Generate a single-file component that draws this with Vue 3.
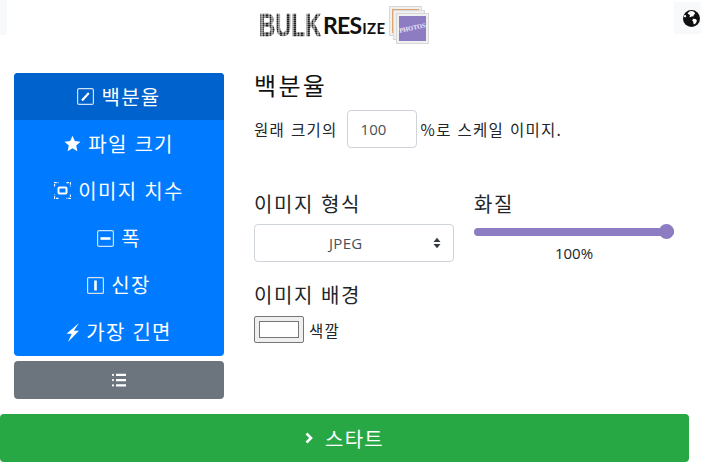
<script setup>
import { ref } from 'vue';

const menu = [
  { label: '백분율', icon: 'edit', active: true },
  { label: '파일 크기', icon: 'star' },
  { label: '이미지 치수', icon: 'dims' },
  { label: '폭', icon: 'minus' },
  { label: '신장', icon: 'bar' },
  { label: '가장 긴면', icon: 'bolt' },
];

const percent = ref('100');
const format = ref('JPEG');
const quality = ref(100);
</script>

<template>
  <div class="page">
    <header class="top">
      <div class="side-stub"></div>
      <div class="logo">
        <span class="bulk">BULK</span>
        <span class="resize">RES<small>IZE</small></span>
        <div class="stack">
          <i class="sheet s1"></i>
          <i class="sheet s2"></i>
          <i class="sheet s3"><span>PHOTOS</span></i>
        </div>
      </div>
      <div class="lang" aria-label="language">
        <svg viewBox="0 0 16 16" width="17" height="17">
          <circle cx="8" cy="8" r="8" fill="#111" />
          <path fill="#fff" d="M6.400 1.100 8.600.9l2 1 .8 1.600-1.300 1.100-.4 1.500-1.400-.2-1 1-1.200-.8.6-1.400-1.500-.6L4.300 3zM9.600 8.200l2.200.2 1.300 1.200-.7 2.300-1.500 1.600-.9-.3-.4-2.200-1-1.300zM1.300 4.600l1.200.2.6 1.200-1.100 1-1.100-.6z" />
        </svg>
      </div>
    </header>

    <div class="body">
      <aside class="side">
        <nav class="menu">
          <a v-for="m in menu" :key="m.label" class="item" :class="{ active: m.active }">
            <svg v-if="m.icon === 'edit'" viewBox="0 0 17 17" width="17" height="17">
              <rect x=".6" y=".6" width="15.800" height="15.800" rx="1.500" fill="none" stroke="#cfe2f7" stroke-width="1.200" />
              <path d="M5 12.500 11.800 5" fill="none" stroke="currentColor" stroke-width="2.200" />
            </svg>
            <svg v-else-if="m.icon === 'star'" viewBox="0 0 16 16" width="17" height="17">
              <path d="M8 .8l2.200 4.900 5.300.6-4 3.600 1.100 5.300L8 12.500l-4.600 2.700 1.100-5.300-4-3.600 5.300-.6z" fill="currentColor" />
            </svg>
            <svg v-else-if="m.icon === 'dims'" viewBox="0 0 17 17" width="17" height="17">
              <path d="M.6 4.500V.6H4.500M12.500.6h3.900V4.500M16.400 12.500v3.900H12.500M4.500 16.400H.6V12.500" fill="none" stroke="currentColor" stroke-width="1.100" stroke-dasharray="2.500 1" />
              <rect x="4.500" y="5.500" width="8" height="6" rx="1" fill="none" stroke="currentColor" stroke-width="2" />
            </svg>
            <svg v-else-if="m.icon === 'minus'" viewBox="0 0 17 17" width="17" height="17">
              <rect x=".6" y=".6" width="15.800" height="15.800" rx="1.500" fill="none" stroke="#cfe2f7" stroke-width="1.200" />
              <rect x="3.500" y="7.200" width="10" height="2.600" fill="currentColor" />
            </svg>
            <svg v-else-if="m.icon === 'bar'" viewBox="0 0 17 17" width="17" height="17">
              <rect x=".6" y=".6" width="15.800" height="15.800" rx="1" fill="none" stroke="#cfe2f7" stroke-width="1.200" />
              <rect x="7.200" y="3.500" width="2.600" height="10" fill="currentColor" />
            </svg>
            <svg v-else viewBox="0 0 13 19" width="13" height="19">
              <path d="M13 0 .5 10.800h5.200L2 19 13 7.800H7.800z" fill="currentColor" />
            </svg>
            <span>{{ m.label }}</span>
          </a>
        </nav>
        <button class="more" type="button" aria-label="more">
          <svg viewBox="0 0 16 16" width="16" height="16">
            <path d="M5 1.700h10v2.400H5zM5 6.900h10v2.400H5zM5 12.200h10v2.400H5z" fill="currentColor" />
            <circle cx="2" cy="2.900" r="1.100" fill="currentColor" />
            <circle cx="2" cy="8.100" r="1.100" fill="currentColor" />
            <circle cx="2" cy="13.400" r="1.100" fill="currentColor" />
          </svg>
        </button>
      </aside>

      <main class="main">
        <h2>백분율</h2>
        <div class="scale-row">
          <span>원래 크기의</span>
          <input v-model="percent" class="pct" type="text" />
          <span>%로 스케일 이미지.</span>
        </div>

        <div class="opts">
          <div class="opt">
            <label>이미지 형식</label>
            <div class="select">
              <span>{{ format }}</span>
              <svg viewBox="0 0 8 12" width="8" height="12">
                <path d="M4 .8 7.500 5H.5zM4 11.200.5 7h7z" fill="#343a40" />
              </svg>
            </div>
          </div>
          <div class="opt">
            <label>화질</label>
            <div class="slider">
              <div class="track"></div>
              <div class="knob"></div>
            </div>
            <div class="val">{{ quality }}%</div>
          </div>
        </div>

        <label class="bg-label">이미지 배경</label>
        <div class="color-row">
          <div class="swatch"><i></i></div>
          <span>색깔</span>
        </div>
      </main>
    </div>

    <button class="start" type="button">
      <svg viewBox="0 0 8 12" width="8" height="12">
        <path d="M1.500 1.500 6 6l-4.500 4.500" fill="none" stroke="currentColor" stroke-width="2.600" />
      </svg>
      <span>스타트</span>
    </button>
  </div>
</template>

<style>
html, body {
  background: #fff;
  overflow: hidden;
}
</style>

<style scoped>
.page {
  width: 701px;
  height: 475px;
  font-family: "Noto Sans CJK KR", "Liberation Sans", sans-serif;
  color: #212529;
  font-size: 16px;
  letter-spacing: 1.300px;
  word-spacing: 1px;
}

.top {
  height: 45px;
  display: flex;
  align-items: flex-start;
}

.side-stub {
  width: 7px;
  height: 35px;
  background: #f8f9fa;
}

.logo {
  margin-left: 252px;
  width: 172px;
  height: 45px;
  display: flex;
  align-items: flex-start;
  letter-spacing: 0;
}

.bulk {
  font: bold 32px/1 "Liberation Sans", sans-serif;
  -webkit-text-stroke: 0.6px transparent;
  width: 92px;
  margin: 9px -28px 0 0;
  color: transparent;
  background:
    repeating-linear-gradient(0deg, rgba(255, 255, 255, 0.3) 0 1px, transparent 1px 2px),
    repeating-linear-gradient(90deg, #222 0 1px, #888 1px 2px);
  -webkit-background-clip: text;
  background-clip: text;
  transform: scaleX(0.7);
  transform-origin: left center;
  white-space: nowrap;
}

.resize {
  font: bold 23px/1 "Lato", sans-serif;
  color: #111;
  width: 65px;
  margin-top: 14px;
  letter-spacing: -0.8px;
  white-space: nowrap;
}

.resize small {
  font-size: 15px;
  letter-spacing: 0.4px;
  margin-left: 1px;
}

.stack {
  width: 43px;
  height: 38px;
  position: relative;
  margin-top: 6px;
}

.sheet {
  position: absolute;
  display: block;
  box-sizing: border-box;
  border: 3px solid #f0f0f0;
  outline: 1px solid #d8d8d8;
  outline-offset: -1px;
}

.s1 {
  left: 1px;
  top: 0;
  width: 33px;
  height: 30px;
  background: #dca673;
}

.s2 {
  left: 5px;
  top: 4px;
  width: 32px;
  height: 30px;
  background: #7ea6e8;
}

.s3 {
  left: 8px;
  top: 7px;
  width: 33px;
  height: 31px;
  background: #8e7cc3;
  display: flex;
  align-items: center;
  justify-content: center;
}

.s3 span {
  font: bold 6.500px/1 "Liberation Serif", serif;
  letter-spacing: 0;
  color: #eee9fa;
  transform: rotate(-12deg);
}

.lang {
  margin-left: auto;
  margin-top: 2px;
  width: 27px;
  height: 32px;
  padding: 8px 1px 0 9px;
  box-sizing: border-box;
  background: #f8f9fa;
}

.lang svg {
  display: block;
}

.body {
  display: flex;
  padding: 28px 0 0 14px;
  height: 341px;
}

.side {
  width: 210px;
  flex: none;
}

.menu {
  background: #007bff;
  border-radius: 4px;
  overflow: hidden;
  height: 283px;
  display: flex;
  flex-direction: column;
}

.item {
  height: 47.200px;
  color: #fff;
  font-size: 20px;
  display: flex;
  align-items: center;
  justify-content: center;
  gap: 7px;
  line-height: 1;
}

.item svg {
  flex: none;
}

.item.active {
  background: #0062cc;
}

.more {
  display: flex;
  width: 100%;
  height: 38px;
  margin-top: 5px;
  border: 0;
  border-radius: 4px;
  background: #6c757d;
  color: #fff;
  align-items: center;
  justify-content: center;
}

.main {
  margin-left: 30px;
  width: 420px;
}

h2 {
  margin: -3px 0 0;
  font-size: 24px;
  font-weight: 400;
  line-height: 29px;
  color: #111;
  letter-spacing: 2.300px;
}

.scale-row {
  display: flex;
  align-items: center;
  margin-top: 11px;
  font-size: 15.500px;
}

.pct {
  width: 70px;
  height: 38px;
  box-sizing: border-box;
  margin: 0 4px 0 9px;
  padding: 0 0 0 13px;
  text-align: left;
  border: 1px solid #ced4da;
  border-radius: 4px;
  font: 15px "Open Sans", sans-serif;
  letter-spacing: 0;
  color: #495057;
}

.opts {
  display: flex;
  gap: 20px;
  margin-top: 44px;
}

.opt {
  width: 200px;
}

.opt label,
.bg-label {
  display: block;
  font-size: 20px;
  line-height: 24px;
  margin-bottom: 8px;
  letter-spacing: 1.600px;
}

.select {
  height: 38px;
  box-sizing: border-box;
  border: 1px solid #ced4da;
  border-radius: 4px;
  display: flex;
  align-items: center;
  justify-content: space-between;
  padding: 0 12px 0 74px;
  font: 15px "Open Sans", sans-serif;
  letter-spacing: 0.300px;
  color: #495057;
}

.slider {
  position: relative;
  height: 16px;
}

.track {
  position: absolute;
  left: 0;
  right: 0;
  top: 4px;
  height: 8px;
  border-radius: 4px;
  background: #8e7cc3;
}

.knob {
  position: absolute;
  right: 0;
  top: 0;
  width: 15px;
  height: 15px;
  border-radius: 50%;
  background: #8e7cc3;
}

.val {
  text-align: center;
  font: 15px/20px "Open Sans", sans-serif;
  letter-spacing: 0;
  margin-top: 3px;
}

.bg-label {
  margin-top: 20px;
  margin-bottom: 9px;
}

.color-row {
  display: flex;
  align-items: center;
  gap: 5px;
  font-size: 15.500px;
}

.swatch {
  width: 50px;
  height: 27px;
  box-sizing: border-box;
  border: 1px solid #767676;
  border-radius: 2px;
  background: #efefef;
  padding: 4px;
}

.swatch i {
  display: block;
  height: 100%;
  background: #fff;
  border: 1px solid #767676;
  box-sizing: border-box;
}

.start {
  display: flex;
  align-items: center;
  justify-content: center;
  gap: 12px;
  width: 689px;
  height: 48px;
  padding: 0;
  border: 0;
  border-radius: 4px;
  background: #28a745;
  color: #fff;
  font: 20px "Noto Sans CJK KR", sans-serif;
  letter-spacing: 1.300px;
}
</style>
